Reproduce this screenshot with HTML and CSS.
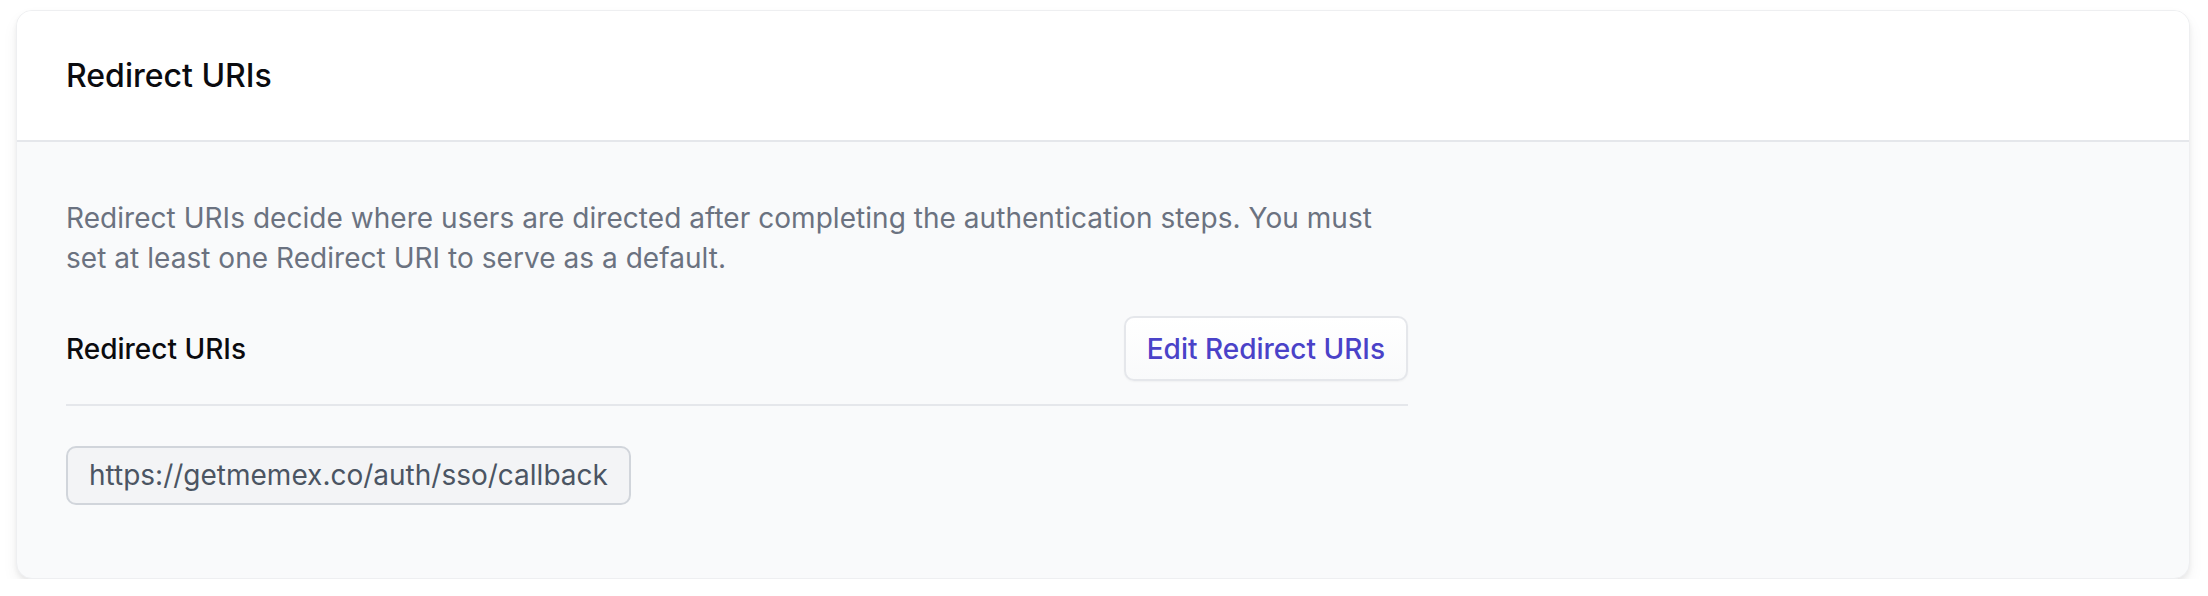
FILE: index.html
```html
<!DOCTYPE html>
<html lang="en">
<head>
<meta charset="utf-8">
<title>Redirect URIs</title>
<link rel="stylesheet" href="styles.css">
</head>
<body>
<div class="page">
  <section class="card">
    <header class="card-header">
      <h2 class="card-title">Redirect URIs</h2>
    </header>
    <div class="card-body">
      <p class="description">Redirect URIs decide where users are directed after completing the authentication steps. You must set at least one Redirect URI to serve as a default.</p>
      <div class="field-row">
        <span class="field-label">Redirect URIs</span>
        <button class="btn-secondary" type="button">Edit Redirect URIs</button>
      </div>
      <div class="uri-list">
        <span class="uri-chip">https://getmemex.co/auth/sso/callback</span>
      </div>
    </div>
  </section>
</div>
</body>
</html>
```

FILE: styles.css
```css
* {
  box-sizing: border-box;
}

html, body {
  margin: 0;
  padding: 0;
  background: #ffffff;
  font-family: Inter, "Noto Sans", "Liberation Sans", sans-serif;
}

.page {
  padding: 10px 18px 0 16px;
}

.card {
  border: 1px solid #eeeff1;
  border-radius: 16px;
  background: #f9fafb;
  overflow: hidden;
  box-shadow: 0 3px 5px rgba(0, 0, 0, 0.06), 0 8px 16px rgba(0, 0, 0, 0.05);
}

.card-header {
  background: #ffffff;
  padding: 41px 49px 40px;
  border-bottom: 2px solid #e5e7eb;
}

.card-title {
  margin: 0;
  font-size: 32px;
  line-height: 48px;
  font-weight: 500;
  color: #0b0b0f;
}

.card-body {
  padding: 56px 49px 73px;
}

.description {
  margin: 0;
  max-width: 1342px;
  font-size: 28px;
  line-height: 40px;
  letter-spacing: 0.04px;
  color: #6b7280;
}

.field-row {
  margin-top: 38px;
  max-width: 1342px;
  display: flex;
  align-items: center;
  justify-content: space-between;
  padding-bottom: 23px;
  border-bottom: 2px solid #e5e7eb;
}

.field-label {
  font-size: 28px;
  line-height: 40px;
  font-weight: 500;
  color: #0b0b0f;
}

.btn-secondary {
  height: 65px;
  padding: 0 21px;
  border: 2px solid #e5e7eb;
  border-radius: 10px;
  background: linear-gradient(#ffffff, #f9fafb);
  box-shadow: 0 1px 2px rgba(0, 0, 0, 0.04);
  font-family: inherit;
  font-size: 28px;
  line-height: 40px;
  font-weight: 500;
  color: #4a42c8;
  cursor: pointer;
}

.uri-list {
  margin-top: 40px;
  display: flex;
  flex-wrap: wrap;
  gap: 16px;
}

.uri-chip {
  display: inline-block;
  padding: 7px 21px 8px;
  border: 2px solid #d1d5db;
  border-radius: 10px;
  background: #f3f4f6;
  font-size: 28px;
  line-height: 40px;
  color: #4b5563;
}
```
